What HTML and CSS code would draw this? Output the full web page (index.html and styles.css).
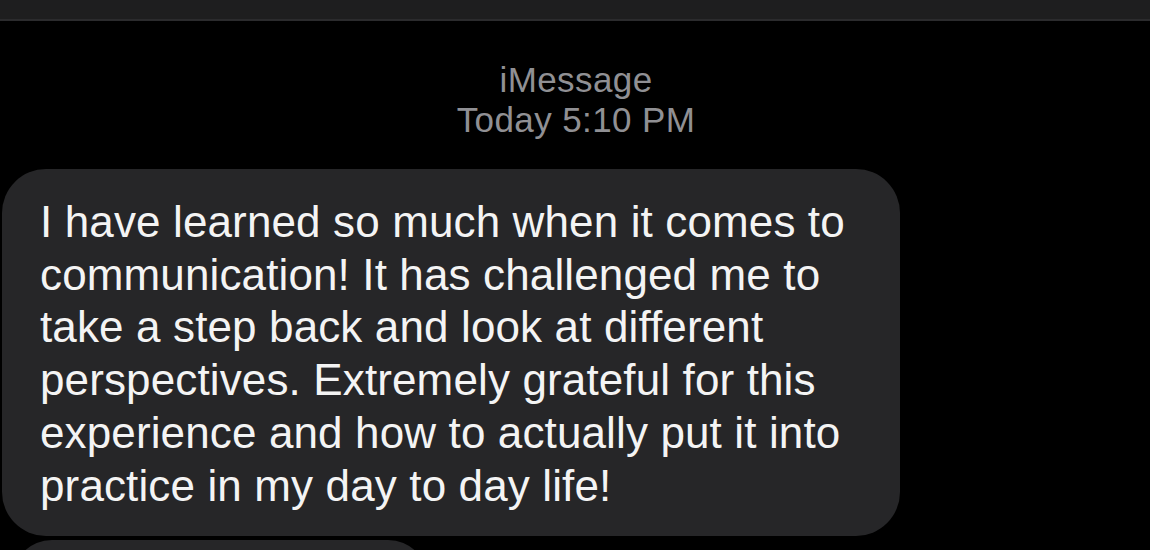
FILE: index.html
```html
<!DOCTYPE html>
<html lang="en">
<head>
<meta charset="utf-8">
<title>iMessage</title>
<link rel="stylesheet" href="styles.css">
</head>
<body>
<div class="topbar"></div>
<div class="thread">
  <div class="meta">
    <div class="service">iMessage</div>
    <div class="time">Today 5:10 PM</div>
  </div>
  <div class="bubble main">I have learned so much when it comes to<br>communication! It has challenged me to<br>take a step back and look at different<br>perspectives. Extremely grateful for this<br>experience and how to actually put it into<br>practice in my day to day life!</div>
  <div class="bubble next"></div>
</div>
</body>
</html>
```
FILE: styles.css
```css
html, body {
  margin: 0;
  padding: 0;
  background: #000;
  height: 100%;
  overflow: hidden;
}
body {
  font-family: "Liberation Sans", Arial, sans-serif;
}
.topbar {
  height: 19px;
  background: #1e1e1f;
  border-bottom: 2px solid #2b2b2d;
}
.thread {
  display: flex;
  flex-direction: column;
  align-items: flex-start;
  height: calc(100% - 21px);
  overflow: hidden;
}
.meta {
  align-self: stretch;
  text-align: center;
  color: #909094;
  font-size: 35px;
  line-height: 40px;
  letter-spacing: 0.4px;
  margin-top: 39px;
  padding-left: 2px;
}
.bubble {
  flex-shrink: 0;
  background: #262628;
  border-radius: 44px;
  color: #f4f4f4;
}
.main {
  margin-top: 29px;
  margin-left: 2px;
  width: 860px;
  padding: 27px 0 24px 38px;
  font-size: 44px;
  line-height: 52.7px;
  letter-spacing: 0.13px;
  white-space: nowrap;
}
.next {
  margin-top: 4px;
  margin-left: 12px;
  width: 416px;
  height: 80px;
  border-radius: 40px;
}
```
